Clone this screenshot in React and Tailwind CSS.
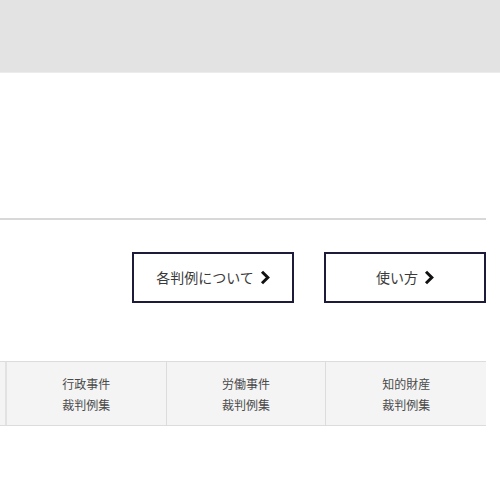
import React from "react";

const Chevron = () => (
  <svg width="10" height="15" viewBox="0 0 10 15" className="ml-[6px]">
    <path d="M2 1.8 L7.8 7.5 L2 13.2" fill="none" stroke="#111" strokeWidth="3" strokeLinecap="butt" strokeLinejoin="miter" />
  </svg>
);

const cells = [
  ["行政事件", "裁判例集"],
  ["労働事件", "裁判例集"],
  ["知的財産", "裁判例集"],
];

export default function App() {
  return (
    <div
      className="w-[500px] h-[500px] bg-white overflow-hidden text-[#333]"
      style={{ fontFamily: '"Noto Sans CJK JP", "Noto Sans", sans-serif' }}
    >
      <div className="h-[73px] bg-[#e3e3e3] border-b border-[#ececec]" />
      <div className="h-[145px]" />
      <div className="w-[486px] h-[2px] bg-[#d8d8d8]" />
      <div className="flex justify-end w-[486px] gap-[30px] mt-[32px]">
        <button className="w-[162px] h-[51px] border-2 border-[#1c1b3a] flex items-center justify-center text-[14px] text-[#3a3a3a]">
          各判例について
          <Chevron />
        </button>
        <button className="w-[162px] h-[51px] border-2 border-[#1c1b3a] flex items-center justify-center text-[14px] text-[#3a3a3a]">
          使い方
          <Chevron />
        </button>
      </div>
      <div className="flex w-[486px] mt-[58px] border-y border-[#dcdcdc] bg-[#f4f4f4]">
        <div className="w-[7px] h-[63px] border-r-2 border-[#e2e2e2]" />
        {cells.map((c, i) => (
          <div
            key={i}
            className={`w-[160px] h-[63px] flex flex-col items-center justify-center text-[12px] leading-[21px] text-[#4a4a4a] ${i < 2 ? "border-r border-[#dcdcdc]" : ""}`}
          >
            <span>{c[0]}</span>
            <span>{c[1]}</span>
          </div>
        ))}
      </div>
    </div>
  );
}
